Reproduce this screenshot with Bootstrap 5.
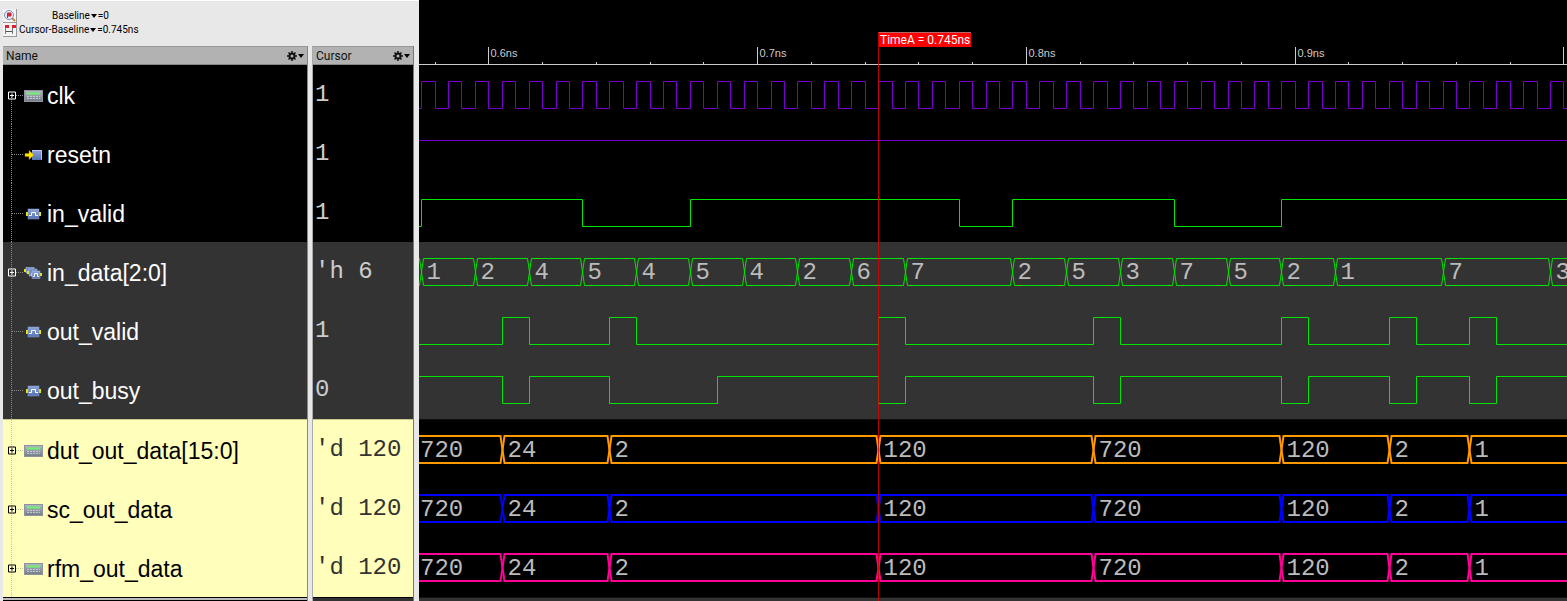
<!DOCTYPE html>
<html lang="en">
<head>
<meta charset="utf-8">
<meta name="viewport" content="width=device-width, initial-scale=1">
<title>Waveform viewer</title>
<link href="https://cdn.jsdelivr.net/npm/bootstrap@5.3.0/dist/css/bootstrap.min.css" rel="stylesheet">
<style>
  :root { --chrome: #e8e8e8; --row: 59px; }
  body { font-family: Roboto, "Liberation Sans", sans-serif; font-size: 12px; line-height: 14px; background: #000; }
  button { border: 0; padding: 0; background: none; color: inherit; }
  svg { display: block; flex: none; }
  .viewer { min-height: 100vh; }
  .side { background: var(--chrome); width: 419px; padding: 0 5px 0 3px; border-top: 1px solid #fff; }
  .toolbar { height: 45px; padding-top: 8px; font-size: 10px; color: #000; }
  .tool-btn { width: 14px; height: 14px; margin-right: 2px; background: #f4f4f4; border-right: 1px solid #999; border-bottom: 1px solid #999; }
  .base-indent { padding-left: 33px; }
  .tri { width: 0; height: 0; margin: 0 1px; border: 3px solid transparent; border-top: 4px solid #000; border-bottom: 0; }
  .col-name { border-right: 1px solid #888; }
  .col-val { width: 102px; border-left: 1px solid #aaa; border-right: 1px solid #777; }
  .head { height: 19px; background: #b2b2b2; border-top: 1px solid #999; border-bottom: 1px solid #888; padding: 0 2px 0 3px; color: #111; }
  .sig-group { margin: 0; padding: 0; list-style: none; background: #000; color: #fff; border-bottom: 1px solid #111; }
  .sig-group:first-of-type { border-bottom: 0; }
  .sig-group.mid { background: #333; }
  .side .sig-group.out { background: #ffffbb; color: #000; border-bottom-color: #000; }
  .side .sig-group.mid { border-bottom-color: #c8c88a; }
  .sig { height: var(--row); }
  .names .sig { padding: 2px 0 0 5px; font: 23px/28px "Liberation Sans", sans-serif; background: repeating-linear-gradient(#888 0 1px, transparent 1px 2px) 8px 0 / 1px 100% no-repeat; }
  .names .first { background-size: 1px 50%; background-position: 8px 100%; }
  .names .out .sig { background-image: repeating-linear-gradient(#c8c8a0 0 1px, transparent 1px 2px); }
  .stem { width: 16px; height: 12px; display: flex; align-items: center; }
  .stem::after { content: ""; flex: 1; height: 1px; background: repeating-linear-gradient(90deg, #888 0 1px, transparent 1px 2px); }
  .stem.leaf { padding-left: 4px; }
  .out .stem::after { background: repeating-linear-gradient(90deg, #c8c8a0 0 1px, transparent 1px 2px); }
  .expander { width: 8px; height: 9px; display: block; }
  .sig-icon { margin-right: 4px; }
  .values .sig { padding: 1px 0 0 2px; font: 24px/28px "Liberation Mono", monospace; white-space: pre; color: #ccc; }
  .values .out .sig { color: #333; }
  .rest { flex: 1 0 3px; background: #333; }
  .names .rest { background: #bbb; border-bottom: 1px solid #000; }
  .waves svg { width: 100%; overflow: hidden; }
  .waves .sig text { font: 24px "Liberation Mono", monospace; fill: #bbb; }
  .ruler text { font: 11px "Liberation Sans", sans-serif; fill: #ccc; }
  .cursor-line { top: 32px; bottom: 0; border-left: 1px solid rgba(220, 0, 0, .85); }
  .cursor-tag { background: #f00; color: #fff; height: 15px; padding: 0 1px; border-top: 1px solid #b66; white-space: nowrap; }
</style>
</head>
<body>
<svg class="position-absolute" width="0" height="0" aria-hidden="true">
  <defs>
    <linearGradient id="steel" x2="0" y2="1"><stop stop-color="#b4bac4"/><stop offset="1" stop-color="#737b88"/></linearGradient>
    <linearGradient id="azure" x2="0" y2="1"><stop stop-color="#8fa6dc"/><stop offset="1" stop-color="#5672b4"/></linearGradient>
    <symbol id="i-group" viewBox="0 0 19 12"><rect x=".5" y=".5" width="18" height="11" fill="url(#steel)" stroke="#8d939c"/><path d="M3 3.500h13" stroke="#6bf56b" stroke-width="2"/><path d="M3 6.500h13M3 8.500h13" stroke="#c3c9d2" stroke-dasharray="2 1"/></symbol>
    <symbol id="i-input" viewBox="0 0 19 12"><rect x="8" y="1" width="10" height="10" fill="url(#azure)"/><path d="M8 1.500h9.500v9" fill="none" stroke="#b9c8ee"/><path d="M1 4.500h4V1.500l5 4.500-5 4.500V7.500H1z" fill="#ffe600" stroke="#b98700" stroke-width=".5"/></symbol>
    <symbol id="i-wire" viewBox="0 0 19 12"><path d="M2 4h15v4H2z" fill="#e8e800"/><rect x="4" y="1" width="11" height="10" fill="url(#azure)" stroke="#8ea3d5" stroke-width=".5"/><path d="M5 7.500h2.500v-3h4v3H14" fill="none" stroke="#fff"/></symbol>
    <symbol id="i-bus" viewBox="0 0 19 12"><path d="M0 2h10v3H0z" fill="#e8e800"/><path d="M2 0h8v6H2z" fill="#7187bd" stroke="#c2cde8" stroke-width=".5"/><path d="M3 4h10v3H3z" fill="#e8e800"/><path d="M5 2h8v7H5z" fill="#6d86c6" stroke="#c2cde8" stroke-width=".5"/><path d="M7 6h11v3H7z" fill="#e8e800"/><rect x="8" y="4" width="8" height="7.500" fill="url(#azure)" stroke="#b0bfe4" stroke-width=".5"/><path d="M9 9.500h1.500v-3h3v3H15" fill="none" stroke="#fff"/></symbol>
    <symbol id="i-plus" viewBox="0 0 8 9"><path d="M.5 1h7v7h-7zM2 4.500h4M4 2.500v4" fill="none" stroke="currentColor"/></symbol>
    <symbol id="i-gear" viewBox="0 0 10 10"><circle cx="5" cy="5" r="2.500" fill="none" stroke="#111" stroke-width="2"/><path d="M5 0v2M5 8v2M0 5h2M8 5h2M1.500 1.500l1.500 1.500M7 7l1.500 1.500M8.500 1.500L7 3M3 7L1.500 8.500" stroke="#111" stroke-width="1.500"/></symbol>
  </defs>
</svg>

<main class="viewer d-flex">
  <section class="side d-flex flex-column flex-shrink-0">
    <div class="toolbar">
      <div class="d-flex align-items-center">
        <button class="tool-btn" aria-label="Zoom to baseline"><svg width="13" height="13"><circle cx="6" cy="6" r="4.500" fill="#e9eefb" stroke="#7d8fc0"/><path d="M9 9l3 3" stroke="#b58a4a" stroke-width="2"/><path d="M4.500 9V4H8v3H5" fill="#e03040" stroke="#c02030"/></svg></button>
        <button class="base-indent d-flex align-items-center"><span>Baseline</span><span class="tri"></span></button><span>=0</span>
      </div>
      <div class="d-flex align-items-center">
        <button class="tool-btn" aria-label="Cursor to baseline"><svg width="13" height="13"><path d="M2.500 2v9M9.500 2v9" stroke="#777"/><path d="M2 2h4v3H2zM9 2h4v3H9z" fill="#e02030"/><path d="M3 8.500h6" stroke="#555"/></svg></button>
        <button class="d-flex align-items-center"><span>Cursor-Baseline</span><span class="tri"></span></button><span>=0.745ns</span>
      </div>
    </div>
    <div class="d-flex flex-grow-1 gap-1">
      <div class="names col-name d-flex flex-column flex-grow-1">
        <div class="head d-flex align-items-center"><span class="me-auto">Name</span>
          <button class="d-flex align-items-center" aria-label="Name options"><svg width="10" height="10"><use href="#i-gear"/></svg><span class="tri"></span></button></div>
        <div id="names"></div><div class="rest"></div>
      </div>
      <div class="values col-val d-flex flex-column">
        <div class="head d-flex align-items-center"><span class="me-auto">Cursor</span>
          <button class="d-flex align-items-center" aria-label="Cursor options"><svg width="10" height="10"><use href="#i-gear"/></svg><span class="tri"></span></button></div>
        <div id="values"></div><div class="rest"></div>
      </div>
    </div>
  </section>

  <section class="waves position-relative d-flex flex-column flex-grow-1 overflow-hidden" id="pane">
    <svg class="ruler" id="ruler" height="65"></svg>
    <div id="waves"></div><div class="rest"></div>
    <div class="cursor-line position-absolute" id="cursor"><div class="cursor-tag">TimeA = 0.745ns</div></div>
  </section>
</main>

<script>
  // Times are counted in 5 ps steps from 0.575 ns, the first rising clock edge in view.
  const STEP = 13.44, ORIGIN = 2.6, LAST = 300, HIGH = 16.5, LOW = 43.5;
  const px = k => Math.floor(ORIGIN + STEP * k) + 0.5;
  const range = n => Array.from({ length: n }, (_, i) => i);
  const outEdges = [6, 14, 34, 50, 64, 72, 78];
  const outVals = [720, 24, 2, 120, 720, 120, 2, 1];
  const green = '#00e600', violet = '#7a00d2';

  const groups = [
    { cls: 'top', rows: [
      { name: 'clk', icon: 'group', open: true, value: '1', color: violet, start: 0, edges: range(LAST) },
      { name: 'resetn', icon: 'input', value: '1', color: violet, start: 1, edges: [] },
      { name: 'in_valid', icon: 'wire', value: '1', color: green, start: 0, edges: [0, 12, 20, 40, 44, 56, 64] } ] },
    { cls: 'mid', rows: [
      { name: 'in_data[2:0]', icon: 'bus', open: true, value: "'h 6", color: green,
        bus: ['', 1, 2, 4, 5, 4, 5, 4, 2, 6, 7, 2, 5, 3, 7, 5, 2, 1, 7, 3],
        edges: [0, 4, 8, 12, 16, 20, 24, 28, 32, 36, 44, 48, 52, 56, 60, 64, 68, 76, 84] },
      { name: 'out_valid', icon: 'wire', value: '1', color: green, start: 0, edges: [6, 8, 14, 16, 34, 36, 50, 52, 64, 66, 72, 74, 78, 80] },
      { name: 'out_busy', icon: 'wire', value: '0', color: green, start: 1, edges: [6, 8, 14, 22, 34, 36, 50, 52, 64, 66, 72, 74, 78, 80] } ] },
    { cls: 'out', rows: [
      { name: 'dut_out_data[15:0]', icon: 'group', open: true, value: "'d 120", color: '#ff9900', bus: outVals, edges: outEdges, wide: 2 },
      { name: 'sc_out_data', icon: 'group', open: true, value: "'d 120", color: '#0000ff', bus: outVals, edges: outEdges, wide: 2 },
      { name: 'rfm_out_data', icon: 'group', open: true, value: "'d 120", color: '#ff0099', bus: outVals, edges: outEdges, wide: 2 } ] }
  ];

  function level(row) {
    let on = row.start, d = `M-5 ${on ? HIGH : LOW}`;
    row.edges.forEach(k => { on = !on; d += `H${px(k)}V${on ? HIGH : LOW}`; });
    return `<path d="${d}H${px(LAST)}" fill="none" stroke="${row.color}"/>`;
  }
  function bus(row) {
    const inset = row.wide ? 0.5 : 0, top = HIGH - inset, bot = LOW - inset, mid = 30;
    return row.bus.map((v, i) => {
      const a = i ? px(row.edges[i - 1]) : -8, b = i < row.edges.length ? px(row.edges[i]) : px(LAST);
      return `<path d="M${a} ${mid}L${a + 2} ${top}H${b - 2}L${b} ${mid}L${b - 2} ${bot}H${a + 2}Z" fill="none" stroke="${row.color}" stroke-width="${row.wide || 1}"/>` +
             `<text x="${i ? a + 5 : 1}" y="37">${v}</text>`;
    }).join('');
  }
  const list = cell => groups.map(g => `<ul class="sig-group ${g.cls}">${g.rows.map(cell).join('')}</ul>`).join('');

  document.getElementById('names').innerHTML = list(r =>
    `<li class="sig d-flex align-items-center${r.name === 'clk' ? ' first' : ''}"><span class="stem${r.open ? '' : ' leaf'}">` +
    (r.open ? `<button class="expander" aria-label="Expand ${r.name}"><svg width="8" height="9"><use href="#i-plus"/></svg></button>` : '') +
    `</span><svg class="sig-icon" width="19" height="12"><use href="#i-${r.icon}"/></svg>${r.name}</li>`);
  document.getElementById('values').innerHTML = list(r => `<li class="sig d-flex align-items-center">${r.value}</li>`);
  document.getElementById('waves').innerHTML = list(r => `<li class="sig"><svg height="59">${r.bus ? bus(r) : level(r)}</svg></li>`);

  // Time scale: a tick every 20 ps, a labelled one every 100 ps where its label has room.
  function drawRuler() {
    const width = document.getElementById('pane').clientWidth;
    document.getElementById('ruler').innerHTML = `<path d="M0 64.5H${width}" stroke="#ccc"/>` +
      range(Math.ceil(width / STEP / 4)).map(i => {
        const x = px(1 + 4 * i), major = i % 5 === 1;
        return `<path d="M${x} 64V${major ? 47 : 62}" stroke="#ccc"/>` +
          (major && x + 32 < width ? `<text x="${x + 2}" y="57">${(0.58 + 0.02 * i).toFixed(1)}ns</text>` : '');
      }).join('');
  }
  drawRuler();
  addEventListener('resize', drawRuler);
  document.getElementById('cursor').style.left = Math.floor(px(34)) + 'px';
</script>
<script src="https://cdn.jsdelivr.net/npm/bootstrap@5.3.0/dist/js/bootstrap.bundle.min.js"></script>
</body>
</html>
